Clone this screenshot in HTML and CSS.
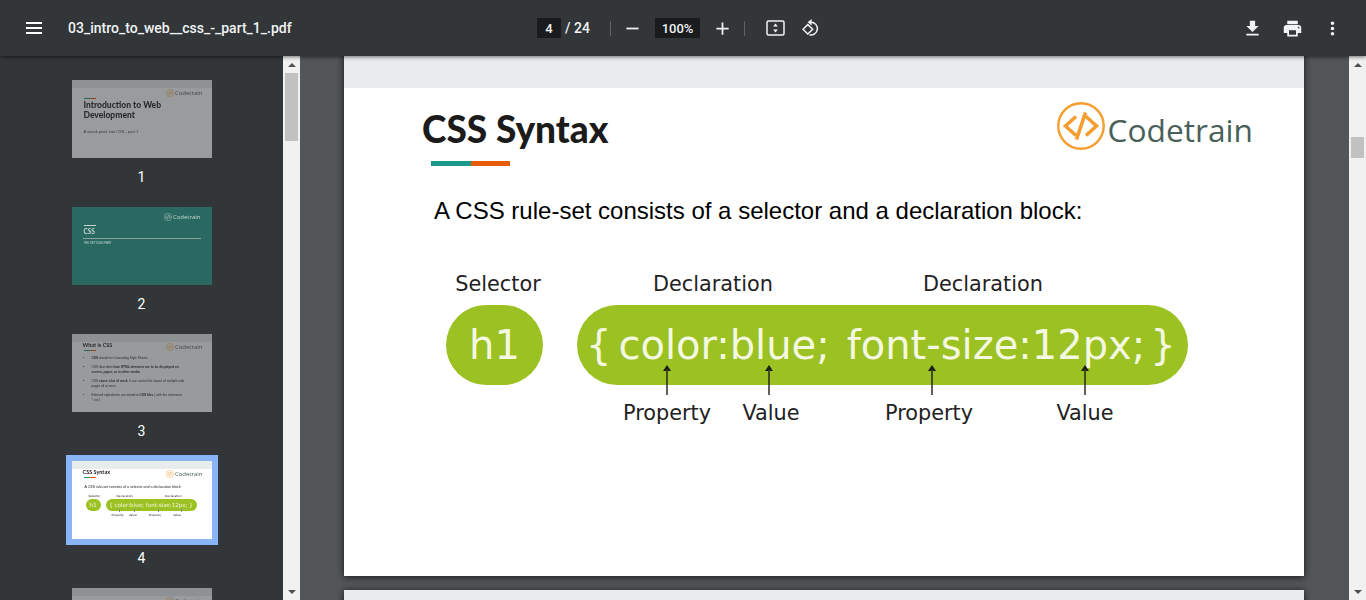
FILE: index.html
```html
<!DOCTYPE html>
<html lang="en">
<head>
  <meta charset="UTF-8">
  <meta name="viewport" content="width=device-width, initial-scale=1.0">
  <title>03_intro_to_web__css_-_part_1_.pdf</title>
  <link rel="stylesheet" href="styles.css">
</head>
<body>
  <header class="toolbar">
    <div class="toolbar-left">
      <svg class="menu-icon" viewBox="0 0 16 12"><path d="M0 0h16v2H0zM0 5h16v2H0zM0 10h16v2H0z"/></svg>
      <span class="file-name">03_intro_to_web__css_-_part_1_.pdf</span>
    </div>
    <div class="toolbar-center">
      <span class="field page-field">4</span>
      <span class="page-total">/ 24</span>
      <span class="separator sep-first"></span>
      <svg class="icon icon-minus" viewBox="0 0 24 24"><path d="M19 13H5v-2h14v2z"/></svg>
      <span class="field zoom-field">100%</span>
      <svg class="icon icon-plus" viewBox="0 0 24 24"><path d="M19 13h-6v6h-2v-6H5v-2h6V5h2v6h6v2z"/></svg>
      <span class="separator sep-second"></span>
      <svg class="icon-fit" viewBox="0 0 19 16">
        <rect x="1" y="1" width="17" height="14" rx="1.5" fill="none" stroke="#f1f3f4" stroke-width="1.5"/>
        <path d="M9.5 3.5l2.4 3H7.1zM9.5 12.5l2.4-3H7.1z" fill="#f1f3f4"/>
      </svg>
      <svg class="icon-rotate" viewBox="0 0 18 18">
        <path d="M9 3.2a6.4 6.4 0 1 1-1.6 12.6" fill="none" stroke="#f1f3f4" stroke-width="1.5"/>
        <path d="M9.6 0l-4 3.2 4 3.2z" fill="#f1f3f4"/>
        <path d="M5.8 5.6L10.7 10.3 5.8 15 1 10.3z" fill="none" stroke="#f1f3f4" stroke-width="1.5"/>
      </svg>
    </div>
    <div class="toolbar-right">
      <span class="action"><svg class="icon" viewBox="0 0 24 24"><path d="M19 9h-4V3H9v6H5l7 7 7-7zM5 18v2h14v-2H5z"/></svg></span>
      <span class="action"><svg class="icon" viewBox="0 0 24 24"><path d="M19 8H5c-1.66 0-3 1.34-3 3v6h4v4h12v-4h4v-6c0-1.66-1.34-3-3-3zm-3 11H8v-5h8v5zm3-7c-.55 0-1-.45-1-1s.45-1 1-1 1 .45 1 1-.45 1-1 1zm-1-9H6v4h12V3z"/></svg></span>
      <span class="action"><svg class="icon" viewBox="0 0 24 24"><path d="M12 8c1.1 0 2-.9 2-2s-.9-2-2-2-2 .9-2 2 .9 2 2 2zm0 2c-1.1 0-2 .9-2 2s.9 2 2 2 2-.9 2-2-.9-2-2-2zm0 6c-1.1 0-2 .9-2 2s.9 2 2 2 2-.9 2-2-.9-2-2-2z"/></svg></span>
    </div>
  </header>

  <div class="main">
    <aside class="sidebar">
      <div class="thumbs">
        <div class="thumb-item">
          <div class="thumb thumb-dim">
            <div class="thumb-band"></div>
            <div class="thumb-logo">
              <svg class="logo-mark" viewBox="0 0 48 48"><use href="#logo"/></svg><span>Codetrain</span>
            </div>
            <div class="thumb-accent accent-low"></div>
            <div class="t1-title">Introduction to Web<br>Development</div>
            <div class="t1-sub">A sneak peek into CSS - part 1</div>
          </div>
          <span class="thumb-label">1</span>
        </div>

        <div class="thumb-item">
          <div class="thumb thumb-teal">
            <div class="thumb-logo logo-light">
              <svg class="logo-mark" viewBox="0 0 48 48"><use href="#logo-light"/></svg><span>Codetrain</span>
            </div>
            <div class="t2-accent"></div>
            <div class="t2-title">CSS</div>
            <div class="t2-rule"></div>
            <div class="t2-sub">THE SETTLING PART</div>
          </div>
          <span class="thumb-label">2</span>
        </div>

        <div class="thumb-item">
          <div class="thumb thumb-dim">
            <div class="thumb-band"></div>
            <div class="thumb-logo">
              <svg class="logo-mark" viewBox="0 0 48 48"><use href="#logo"/></svg><span>Codetrain</span>
            </div>
            <div class="thumb-title">What is CSS</div>
            <div class="thumb-accent"></div>
            <ul class="t3-list">
              <li><b>CSS</b> stands for Cascading Style Sheets</li>
              <li>CSS describes <b>how HTML elements are to be displayed on screen, paper, or in other media</b></li>
              <li>CSS <b>saves a lot of work</b>. It can control the layout of multiple web pages all at once</li>
              <li>External stylesheets are stored in <b>CSS files</b> ( with the extension *.css )</li>
            </ul>
          </div>
          <span class="thumb-label">3</span>
        </div>

        <div class="thumb-item">
          <div class="thumb thumb-selected">
            <div class="thumb-band"></div>
            <div class="thumb-logo">
              <svg class="logo-mark" viewBox="0 0 48 48"><use href="#logo"/></svg><span>Codetrain</span>
            </div>
            <div class="thumb-title">CSS Syntax</div>
            <div class="thumb-accent"></div>
            <div class="t4-text">A CSS rule-set consists of a selector and a declaration block:</div>
            <div class="t4-heads"><span>Selector</span><span>Declaration</span><span>Declaration</span></div>
            <div class="t4-pills">
              <span class="t4-sel">h1</span>
              <span class="t4-decl">{ color:blue; font-size:12px; }</span>
            </div>
            <div class="t4-ticks"><i></i><i></i><i></i><i></i></div>
            <div class="t4-notes"><span>Property</span><span>Value</span><span>Property</span><span>Value</span></div>
          </div>
          <span class="thumb-label">4</span>
        </div>

        <div class="thumb-item">
          <div class="thumb thumb-dim">
            <div class="thumb-band"></div>
            <div class="thumb-logo">
              <svg class="logo-mark" viewBox="0 0 48 48"><use href="#logo"/></svg><span>Codetrain</span>
            </div>
            <div class="thumb-title title-low">CSS Syntax</div>
          </div>
        </div>
      </div>
      <div class="scrollbar">
        <span class="scroll-btn"><i class="arrow-up"></i></span>
        <span class="scroll-thumb sidebar-thumb"></span>
        <span class="scroll-btn scroll-btn-end"><i class="arrow-down"></i></span>
      </div>
    </aside>

    <main class="viewer">
      <article class="page">
        <div class="page-band"></div>
        <div class="slide-head">
          <h1 class="slide-title">CSS Syntax</h1>
          <div class="logo">
            <svg class="logo-mark" viewBox="0 0 48 48"><use href="#logo"/></svg>
            <span class="logo-text">Codetrain</span>
          </div>
        </div>
        <div class="accent"></div>
        <p class="lead">A CSS rule-set consists of a selector and a declaration block:</p>

        <div class="diagram">
          <div class="heads">
            <span class="head-selector">Selector</span>
            <span class="head-decl">Declaration</span>
            <span class="head-decl2">Declaration</span>
          </div>
          <div class="pills">
            <div class="pill-selector">h1</div>
            <div class="pill-decl"><span>{</span><span class="pill-rule">color:blue;</span><span class="pill-rule2">font-size:12px;</span><span class="pill-end">}</span></div>
          </div>
          <div class="notes">
            <div class="note note-a"><svg class="pointer" viewBox="0 0 10 30"><use href="#pointer"/></svg><span>Property</span></div>
            <div class="note note-b"><svg class="pointer shift-left" viewBox="0 0 10 30"><use href="#pointer"/></svg><span>Value</span></div>
            <div class="note note-c"><svg class="pointer shift-right" viewBox="0 0 10 30"><use href="#pointer"/></svg><span>Property</span></div>
            <div class="note note-d"><svg class="pointer" viewBox="0 0 10 30"><use href="#pointer"/></svg><span>Value</span></div>
          </div>
        </div>
      </article>
      <div class="page page-next"><div class="page-band"></div></div>
    </main>

    <div class="scrollbar">
      <span class="scroll-btn"><i class="arrow-up"></i></span>
      <span class="scroll-thumb viewer-thumb"></span>
      <span class="scroll-btn scroll-btn-end"><i class="arrow-down"></i></span>
    </div>
  </div>

  <!-- shared shapes -->
  <svg class="defs" width="0" height="0">
    <symbol id="logo" viewBox="0 0 48 48">
      <circle cx="24" cy="24" r="22.7" fill="none" stroke="#f59d2e" stroke-width="2.4"/>
      <path d="M19 14.5L8.5 24 19 33.5M29 14.5L39.5 24 29 33.5M28.5 10.5l-9 27" fill="none" stroke="#f59d2e" stroke-width="3.6"/>
    </symbol>
    <symbol id="logo-light" viewBox="0 0 48 48">
      <circle cx="24" cy="24" r="22.7" fill="none" stroke="#c6d6d2" stroke-width="2.4"/>
      <path d="M19 14.5L8.5 24 19 33.5M29 14.5L39.5 24 29 33.5M28.5 10.5l-9 27" fill="none" stroke="#c6d6d2" stroke-width="3.6"/>
    </symbol>
    <symbol id="pointer" viewBox="0 0 10 30">
      <path d="M5 1v29" stroke="#1c1c1c" stroke-width="1.4"/>
      <path d="M5 0l4 6H6L5 4 4 6H1z" fill="#1c1c1c"/>
    </symbol>
  </svg>
</body>
</html>
```

FILE: styles.css
```css
* {
  box-sizing: border-box;
}

html, body {
  height: 100%;
}

body {
  margin: 0;
  display: flex;
  flex-direction: column;
  overflow: hidden;
  background: #525659;
  font-family: Roboto, "Liberation Sans", sans-serif;
}

.defs {
  display: none;
}

/* toolbar */
.toolbar {
  flex: 0 0 56px;
  display: flex;
  align-items: center;
  background: #323639;
  color: #f1f3f4;
  position: relative;
  z-index: 2;
  box-shadow: 0 1px 4px rgba(0, 0, 0, .55);
}

.toolbar-left {
  width: 537px;
  display: flex;
  align-items: center;
  padding-left: 26px;
}

.menu-icon {
  width: 16px;
  height: 12px;
  fill: #fff;
}

.file-name {
  margin-left: 26px;
  font-size: 14px;
  font-weight: 500;
}

.toolbar-center {
  display: flex;
  align-items: center;
  font-size: 13px;
  font-weight: 500;
}

.field {
  height: 20px;
  display: flex;
  align-items: center;
  justify-content: center;
  background: #191b1c;
}

.page-field {
  width: 24px;
}

.zoom-field {
  width: 45px;
  margin-left: 12px;
}

.page-total {
  width: 25px;
  margin-left: 4px;
  font-size: 14px;
  white-space: nowrap;
}

.separator {
  width: 1px;
  height: 15px;
  background: #5f6368;
}

.sep-first {
  margin-left: 20px;
}

.sep-second {
  margin-left: 11px;
}

.icon {
  width: 21px;
  height: 21px;
  fill: #f1f3f4;
  display: block;
}

.icon-minus {
  margin-left: 11px;
}

.icon-plus {
  margin-left: 12px;
}

.icon-fit {
  width: 19px;
  height: 16px;
  margin-left: 21px;
}

.icon-rotate {
  width: 18px;
  height: 18px;
  margin-left: 17px;
}

.toolbar-right {
  margin-left: auto;
  padding-right: 14px;
  display: flex;
}

.action {
  width: 40px;
  display: flex;
  justify-content: center;
}

/* layout below the toolbar */
.main {
  flex: 1;
  min-height: 0;
  display: flex;
}

.sidebar {
  flex: 0 0 300px;
  display: flex;
  background: #323639;
}

.thumbs {
  flex: 1;
  padding-top: 24px;
  overflow: hidden;
}

.thumb-item {
  height: 127px;
  display: flex;
  flex-direction: column;
  align-items: center;
}

.thumb-label {
  margin-top: 12px;
  color: #fff;
  font-size: 14px;
  line-height: 15px;
}

.scrollbar {
  flex: 0 0 17px;
  display: flex;
  flex-direction: column;
  background: #f1f1f1;
}

.scroll-btn {
  flex: 0 0 17px;
  display: flex;
  align-items: center;
  justify-content: center;
}

.scroll-btn-end {
  margin-top: auto;
}

.arrow-up {
  border: 4px solid transparent;
  border-top: 0;
  border-bottom: 4px solid #505050;
}

.arrow-down {
  border: 4px solid transparent;
  border-bottom: 0;
  border-top: 4px solid #505050;
}

.scroll-thumb {
  margin: 0 2px;
  background: #c1c1c1;
}

.sidebar-thumb {
  height: 68px;
}

.viewer-thumb {
  height: 21px;
  margin-top: 64px;
}

/* thumbnails */
.thumb {
  width: 140px;
  height: 78px;
  flex: none;
  background: #fff;
  overflow: hidden;
  color: #222;
  font-family: "Liberation Sans", sans-serif;
  display: flex;
  flex-direction: column;
  position: relative;
}

.thumb > * {
  filter: blur(.3px);
}

.thumb-dim {
  opacity: .5;
}

.thumb-selected {
  box-shadow: 0 0 0 6px #8ab4f8;
  overflow: visible;
}

.thumb-teal {
  background: #2a6961;
  color: #c6d6d2;
}

.thumb-band {
  flex: 0 0 8px;
  background: #e8ecec;
}

.thumb-logo {
  position: absolute;
  top: 9px;
  right: 9px;
  display: flex;
  align-items: center;
  gap: 1px;
  font-family: "Open Sans", sans-serif;
  font-size: 6px;
  color: #4a5f5a;
}

.thumb-logo .logo-mark {
  width: 8px;
  height: 8px;
}

.logo-light {
  top: 6px;
  right: 11px;
  color: #c6d6d2;
}

.thumb-title {
  margin: 0 0 0 11px;
  height: 7px;
  font-family: Lato, sans-serif;
  font-size: 5.5px;
  font-weight: 700;
  line-height: 7px;
}

.title-low {
  margin-top: 3px;
}

.thumb-accent {
  flex: none;
  width: 12px;
  height: 1px;
  margin: 1px 0 0 12px;
  background: linear-gradient(90deg, #1a9a8a 50%, #e65c0a 50%);
}

.accent-low {
  margin-top: 10px;
}

.t1-title {
  margin: 1px 0 0 12px;
  font-family: Lato, sans-serif;
  font-size: 8.5px;
  font-weight: 900;
  line-height: 10px;
  white-space: nowrap;
}

.t1-sub {
  margin: 9px 0 0 12px;
  font-size: 4px;
  color: #444;
}

.t2-accent {
  width: 12px;
  height: 1px;
  margin: 18px 0 0 12px;
  background: #c6d6d2;
}

.t2-title {
  margin: 2px 0 0 12px;
  font-family: Lato, sans-serif;
  font-size: 6.5px;
  font-weight: 700;
  line-height: 8px;
}

.t2-rule {
  height: 1px;
  margin: 2px 11px 0;
  background: #8fa09c;
}

.t2-sub {
  margin: 2px 0 0 12px;
  font-size: 2.8px;
}

.t3-list {
  margin: 5px 0 0;
  padding: 0 24px 0 20px;
  font-size: 3.2px;
  line-height: 5px;
}

.t3-list li {
  margin-bottom: 4px;
}

.t4-text {
  margin: 7px 0 0 13px;
  font-size: 3.6px;
  white-space: nowrap;
}

.t4-heads {
  display: flex;
  margin: 5px 0 0 17px;
  font-family: "DejaVu Sans", sans-serif;
  font-size: 2.9px;
  gap: 16px;
}

.t4-heads span:last-child {
  margin-left: 16px;
}

.t4-pills {
  display: flex;
  margin: 1px 0 0 14px;
  gap: 5px;
  font-family: "DejaVu Sans", sans-serif;
  color: #f4f8e0;
}

.t4-sel {
  width: 15px;
  height: 12px;
  border-radius: 6px;
  background: #9bc122;
  font-size: 6px;
  line-height: 12px;
  text-align: center;
}

.t4-decl {
  width: 91px;
  height: 12px;
  border-radius: 6px;
  background: #9bc122;
  font-size: 5.6px;
  line-height: 12px;
  text-align: center;
  white-space: nowrap;
}

.t4-ticks {
  display: flex;
  height: 3px;
  margin: -2px 0 0 47px;
}

.t4-ticks i {
  width: 1px;
  background: #8a8a8a;
  margin-right: 14px;
}

.t4-ticks i:nth-child(2) {
  margin-right: 23px;
}

.t4-ticks i:nth-child(3) {
  margin-right: 22px;
}

.t4-notes {
  display: flex;
  margin: 1px 0 0 40px;
  font-family: "DejaVu Sans", sans-serif;
  font-size: 2.9px;
  gap: 5px;
}

.t4-notes span:nth-child(2),
.t4-notes span:nth-child(3) {
  margin-right: 7px;
}

/* pdf pages */
.viewer {
  flex: 1;
  min-width: 0;
  overflow: hidden;
  padding-left: 44px;
}

.page {
  width: 960px;
  height: 540px;
  margin-top: -20px;
  background: #fff;
  box-shadow: 0 1px 7px rgba(0, 0, 0, .75);
  display: flex;
  flex-direction: column;
}

.page-next {
  margin-top: 14px;
}

.page-band {
  flex: 0 0 52px;
  background: #e8ecec;
}

.slide-head {
  flex: 0 0 73px;
  display: flex;
  justify-content: space-between;
  padding: 0 51px 0 78px;
}

.slide-title {
  margin: 17px 0 0;
  font-family: Lato, sans-serif;
  font-size: 37px;
  font-weight: 900;
  line-height: 48px;
  color: #1b1b1b;
}

.logo {
  display: flex;
  align-items: center;
  height: 48px;
  margin-top: 14px;
  gap: 3px;
  font-family: "Open Sans", sans-serif;
  font-size: 31.7px;
  color: #4a5f5a;
}

.logo-text {
  margin-top: 6px;
}

.logo .logo-mark {
  width: 48px;
  height: 48px;
}

.accent {
  flex: none;
  width: 79px;
  height: 5px;
  margin-left: 87px;
  background: linear-gradient(90deg, #1a9a8a 51%, #e65c0a 51%);
}

.lead {
  margin: 29px 0 0 90px;
  font-family: "Liberation Sans", sans-serif;
  font-size: 24px;
  line-height: 32px;
  color: #000;
}

.diagram {
  margin: 42px 0 0;
  font-family: "DejaVu Sans", sans-serif;
  color: #222;
  font-size: 20.8px;
}

.heads {
  display: flex;
  height: 36px;
  line-height: 30px;
}

.heads span {
  width: 160px;
  text-align: center;
}

.head-selector {
  margin-left: 74px;
}

.head-decl {
  margin-left: 55px;
}

.head-decl2 {
  margin-left: 110px;
}

.pills {
  display: flex;
  gap: 34px;
  margin-left: 102px;
  color: #f4f8e0;
}

.pill-selector,
.pill-decl {
  height: 80px;
  border-radius: 40px;
  background: #9bc122;
  font-size: 40px;
  line-height: 80px;
  white-space: nowrap;
}

.pill-selector {
  width: 97px;
  text-align: center;
}

.pill-decl {
  width: 611px;
  padding-left: 9px;
}

.pill-rule {
  margin-left: 7px;
}

.pill-rule2 {
  margin-left: 17px;
}

.pill-end {
  margin-left: 5px;
}

.notes {
  display: flex;
  margin: -20px 0 0 273px;
}

.note {
  width: 100px;
  display: flex;
  flex-direction: column;
  align-items: center;
  line-height: 26px;
}

.note-b {
  margin-left: 4px;
}

.note-c {
  margin-left: 58px;
}

.note-d {
  margin-left: 56px;
}

.pointer {
  display: block;
  width: 10px;
  height: 30px;
  margin-bottom: 5px;
}

.shift-left {
  margin-right: 4px;
}

.shift-right {
  margin-left: 6px;
}
```
